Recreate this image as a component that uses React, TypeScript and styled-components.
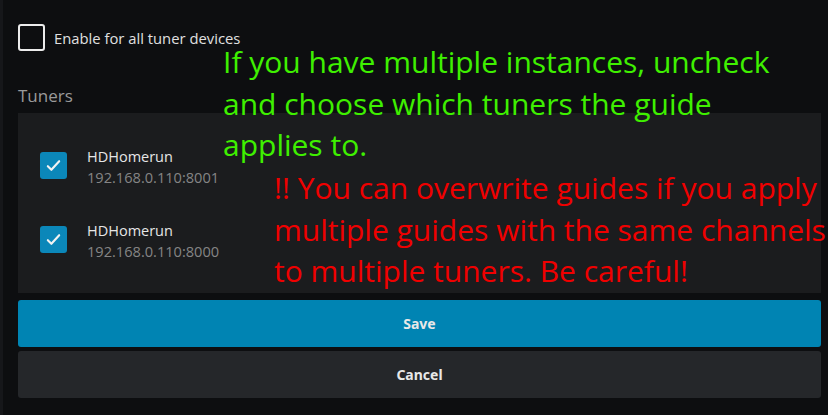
import React from 'react';
import styled, { createGlobalStyle } from 'styled-components';

const GlobalStyle = createGlobalStyle`
  html, body {
    margin: 0;
    padding: 0;
    background: #0d0e10;
  }
  body {
    font-family: "Open Sans", "Noto Sans", sans-serif;
    color: #e4e4e4;
  }
`;

const Page = styled.div`
  position: relative;
  width: 828px;
  height: 415px;
  box-sizing: border-box;
  border-left: 3px solid #16171a;
  padding: 24px 7px 0 15px;
  overflow: hidden;
`;

const Row = styled.label`
  display: flex;
  align-items: center;
  gap: 9px;
  font-size: 14.8px;
  color: #e0e0e0;
`;

const Box = styled.span<{ $checked?: boolean }>`
  width: 27px;
  height: 27px;
  box-sizing: border-box;
  border-radius: 3px;
  flex-shrink: 0;
  display: flex;
  align-items: center;
  justify-content: center;
  background: ${(p) => (p.$checked ? '#0b87b9' : 'transparent')};
  border: ${(p) => (p.$checked ? 'none' : '2px solid #ececec')};
`;

const SectionTitle = styled.div`
  margin-top: 34px;
  font-size: 17px;
  color: #9a9a9a;
  height: 28px;
  line-height: 22px;
`;

const Panel = styled.div`
  background: #1b1c1e;
  padding: 15px 22px 17px;
`;

const TunerRow = styled.div`
  display: flex;
  align-items: center;
  gap: 20px;
  height: 74px;
`;

const TunerInfo = styled.div`
  display: flex;
  flex-direction: column;
  line-height: 21px;
  padding-top: 3px;
`;

const TunerName = styled.span`
  font-size: 14.5px;
  color: #e6e6e6;
`;

const TunerAddr = styled.span`
  font-size: 14.6px;
  color: #858585;
`;

const Actions = styled.div`
  display: flex;
  flex-direction: column;
  gap: 4px;
  margin-top: 7px;
`;

const Button = styled.button<{ $primary?: boolean }>`
  height: 47px;
  border: none;
  border-radius: 3px;
  font-family: "Noto Sans", "Open Sans", sans-serif;
  font-weight: 700;
  font-size: 14px;
  color: #e8e8e8;
  background: ${(p) => (p.$primary ? '#0084b3' : '#25272a')};
`;

const Note = styled.div<{ $color: string; $left: number; $top: number }>`
  position: absolute;
  left: ${(p) => p.$left}px;
  top: ${(p) => p.$top}px;
  color: ${(p) => p.$color};
  font-family: "Open Sans", sans-serif;
  font-size: 30px;
  line-height: 41.5px;
  white-space: nowrap;
`;

const Check = () => (
  <svg width="17" height="17" viewBox="0 0 24 24" fill="none" stroke="#f2f2f2" strokeWidth="3" strokeLinecap="round" strokeLinejoin="round">
    <path d="M4 13l5 5L20 6" />
  </svg>
);

const tuners = [
  { name: 'HDHomerun', addr: '192.168.0.110:8001' },
  { name: 'HDHomerun', addr: '192.168.0.110:8000' },
];

export default function App() {
  return (
    <>
      <GlobalStyle />
      <Page>
        <Row>
          <Box />
          Enable for all tuner devices
        </Row>
        <SectionTitle>Tuners</SectionTitle>
        <Panel>
          {tuners.map((t) => (
            <TunerRow key={t.addr}>
              <Box $checked>
                <Check />
              </Box>
              <TunerInfo>
                <TunerName>{t.name}</TunerName>
                <TunerAddr>{t.addr}</TunerAddr>
              </TunerInfo>
            </TunerRow>
          ))}
        </Panel>
        <Actions>
          <Button $primary>Save</Button>
          <Button>Cancel</Button>
        </Actions>
        <Note $color="#3ff000" $left={220} $top={41}>
          If you have multiple instances, uncheck
          <br />
          and choose which tuners the guide
          <br />
          applies to.
        </Note>
        <Note $color="#f00000" $left={271} $top={167}>
          !! You can overwrite guides if you apply
          <br />
          multiple guides with the same channels
          <br />
          to multiple tuners. Be careful!
        </Note>
      </Page>
    </>
  );
}
